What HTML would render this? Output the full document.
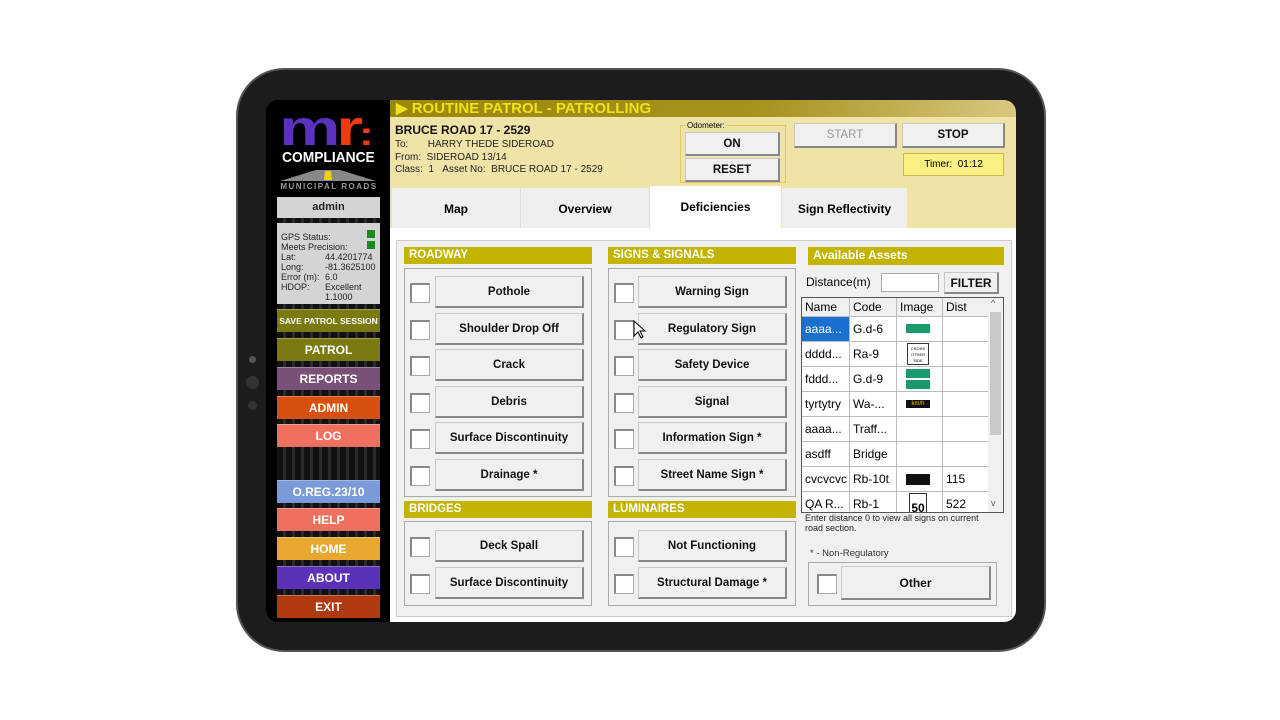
<!DOCTYPE html>
<html><head><meta charset="utf-8"><style>
*{box-sizing:border-box;margin:0;padding:0}
body{width:1280px;height:720px;background:#fff;position:relative;overflow:hidden;font-family:"Liberation Sans",sans-serif}
.a{position:absolute}
.dev{left:236px;top:68px;width:810px;height:584px;border-radius:48px;background:#1c1c1c;border:2px solid #555}
.scr{left:266px;top:100px;width:750px;height:522px;border-radius:12px;overflow:hidden;background:#000}
.side{left:0;top:0;width:124px;height:522px;background:#000}
.str{position:absolute;left:11px;width:103px;background:repeating-linear-gradient(90deg,#111 0 6px,#2a2a2a 6px 9px)}
.sb{position:absolute;left:11px;width:103px;height:23px;color:#fff;font-weight:bold;font-size:12px;text-align:center;line-height:23px;border-top:1px solid rgba(255,255,255,.3)}
.btn{position:absolute;background:#f0f0f0;border:1px solid #c8c8c8;border-right:2px solid #888;border-bottom:2px solid #888;font-weight:bold;font-size:11.5px;text-align:center;color:#111;display:flex;align-items:center;justify-content:center}
.cb{position:absolute;width:20px;height:20px;background:#fff;border:1px solid #aaa;border-left:2px solid #888;border-top:2px solid #888}
.hd{position:absolute;background:#c2b400;color:#fff;font-weight:bold;font-size:11.5px;padding-left:5px;line-height:17px}
.box{position:absolute;border:1px solid #aaa}
.tb{position:absolute;left:0;top:0;width:187px;font-size:12px}
.r{position:absolute;left:0;width:187px;height:25px;border-bottom:1px solid #bbb}
.c{position:absolute;top:0;height:100%;line-height:24px;padding-left:3px;white-space:nowrap;overflow:hidden;border-right:1px solid #bbb}
.c1{left:0;width:48px}.c2{left:48px;width:47px}.c3{left:95px;width:46px}.c4{left:141px;width:46px;border-right:none}
</style></head><body>
<div class="a dev"></div>
<div class="a" style="left:249px;top:356px;width:7px;height:7px;border-radius:50%;background:#555"></div>
<div class="a" style="left:246px;top:376px;width:13px;height:13px;border-radius:50%;background:#333"></div>
<div class="a" style="left:248px;top:401px;width:9px;height:9px;border-radius:50%;background:#333"></div>
<div class="a scr">
 <div class="a side">
  <div class="str" style="top:118px;height:6px"></div>
  <div class="str" style="top:204px;height:6px"></div>
  <div class="str" style="top:232px;height:6px"></div>
  <div class="str" style="top:261px;height:6px"></div>
  <div class="str" style="top:290px;height:6px"></div>
  <div class="str" style="top:318px;height:6px"></div>
  <div class="str" style="top:347px;height:33px"></div>
  <div class="str" style="top:402px;height:6px"></div>
  <div class="str" style="top:431px;height:6px"></div>
  <div class="str" style="top:460px;height:6px"></div>
  <div class="str" style="top:489px;height:6px"></div>
  <div class="a" style="left:13px;top:4px;font:bold 50px/48px 'Liberation Sans',sans-serif;letter-spacing:-3px;color:#5b32c0;transform:scale(1.38,1);transform-origin:left">m<span style="color:#f03a10">r</span><span style="color:#f03a10;font-size:32px">:</span></div>
  <div class="a" style="left:12px;top:49px;width:100px;text-align:center;color:#fff;font:bold 15px 'Liberation Sans',sans-serif;transform:scaleX(.92)">COMPLIANCE</div>
  <svg class="a" style="left:12px;top:67px" width="100" height="16"><polygon points="2,14 38,3 62,3 98,14" fill="#888"/><polygon points="47,4 53,4 54,13 46,13" fill="#f0d000"/></svg>
  <div class="a" style="left:11px;top:82px;width:104px;text-align:center;color:#999;font:bold 8px 'Liberation Sans',sans-serif;letter-spacing:1.5px;background:#000">MUNICIPAL ROADS</div>
  <div class="a" style="left:11px;top:97px;width:103px;height:21px;background:#d4d4d4;text-align:center;font:bold 11px/21px 'Liberation Sans';color:#222">admin</div>
  <div class="a" style="left:11px;top:123px;width:103px;height:81px;background:#d4d4d4;font:9px/10px 'Liberation Sans';color:#222;padding:9px 0 0 4px">
   <div>GPS Status:</div><div>Meets Precision:</div><div>Lat:<span class="a" style="left:48px">44.4201774</span></div><div>Long:<span class="a" style="left:48px">-81.3625100</span></div><div>Error (m):<span class="a" style="left:48px">6.0</span></div><div>HDOP:<span class="a" style="left:48px">Excellent</span></div><div><span class="a" style="left:48px">1.1000</span>&nbsp;</div>
   <div class="a" style="left:90px;top:7px;width:8px;height:8px;background:#1a8a1a"></div>
   <div class="a" style="left:90px;top:18px;width:8px;height:8px;background:#1a8a1a"></div>
  </div>
  <div class="sb" style="top:209px;background:#7a7a10;font-size:8.5px">SAVE PATROL SESSION</div>
  <div class="sb" style="top:238px;background:#7a7a10">PATROL</div>
  <div class="sb" style="top:267px;background:#7a5078">REPORTS</div>
  <div class="sb" style="top:296px;background:#d85010">ADMIN</div>
  <div class="sb" style="top:324px;background:#f07060">LOG</div>
  <div class="sb" style="top:380px;background:#7a9ad8">O.REG.23/10</div>
  <div class="sb" style="top:408px;background:#f07060">HELP</div>
  <div class="sb" style="top:437px;background:#e8a830">HOME</div>
  <div class="sb" style="top:466px;background:#5a32b8">ABOUT</div>
  <div class="sb" style="top:495px;background:#b03a10">EXIT</div>
 </div>
 <div class="a" style="left:124px;top:0;width:626px;height:17px;background:linear-gradient(90deg,#9a8808,#a89220 60%,#d8c880);color:#f0e020;font:bold 15px/17px 'Liberation Sans';padding-left:6px">▶ ROUTINE PATROL - PATROLLING</div>
 <div class="a" style="left:124px;top:17px;width:626px;height:111px;background:#efe3a8"></div>
 <div class="a" style="left:129px;top:23px;font:bold 12px 'Liberation Sans';color:#111">BRUCE ROAD 17 - 2529</div>
 <div class="a" style="left:129px;top:39px;font:10px/12.5px 'Liberation Sans';color:#222">To:&nbsp;&nbsp;&nbsp;&nbsp;&nbsp;&nbsp;&nbsp;HARRY THEDE SIDEROAD<br>From:&nbsp;&nbsp;SIDEROAD 13/14<br>Class:&nbsp;&nbsp;1&nbsp;&nbsp;&nbsp;Asset No:&nbsp;&nbsp;BRUCE ROAD 17 - 2529</div>
 <div class="a" style="left:414px;top:25px;width:106px;height:58px;border:1px solid #e0c860"></div>
 <div class="a" style="left:420px;top:21px;font:8px 'Liberation Sans';background:#efe3a8;padding:0 1px">Odometer:</div>
 <div class="btn" style="left:419px;top:32px;width:95px;height:24px">ON</div>
 <div class="btn" style="left:419px;top:58px;width:95px;height:24px">RESET</div>
 <div class="btn" style="left:528px;top:23px;width:103px;height:25px;color:#999;font-weight:normal">START</div>
 <div class="btn" style="left:636px;top:23px;width:103px;height:25px">STOP</div>
 <div class="a" style="left:637px;top:53px;width:101px;height:23px;background:#f8f080;border:1px solid #c8b850;font:10px/21px 'Liberation Sans';text-align:center">Timer:&nbsp;&nbsp;01:12</div>
 <div class="a" style="left:126px;top:88px;width:129px;height:40px;background:#efefef;border-right:1px solid #ddd;font:bold 12px/42px 'Liberation Sans';text-align:center">Map</div>
 <div class="a" style="left:255px;top:88px;width:129px;height:40px;background:#efefef;border-right:1px solid #ddd;font:bold 12px/42px 'Liberation Sans';text-align:center">Overview</div>
 <div class="a" style="left:384px;top:86px;width:131px;height:42px;background:#fff;font:bold 12px/42px 'Liberation Sans';text-align:center">Deficiencies</div>
 <div class="a" style="left:516px;top:88px;width:125px;height:40px;background:#efefef;font:bold 12px/42px 'Liberation Sans';text-align:center">Sign Reflectivity</div>
 <div class="a" style="left:124px;top:128px;width:626px;height:394px;background:#fff"></div>
 <div class="a" style="left:130px;top:140px;width:616px;height:377px;background:#f0f0f0;border:1px solid #ccc"></div>
</div>
<div class="hd" style="left:404px;top:247px;width:188px">ROADWAY</div>
<div class="box" style="left:404px;top:268px;width:188px;height:229px"></div>
<div class="hd" style="left:608px;top:247px;width:188px">SIGNS &amp; SIGNALS</div>
<div class="box" style="left:608px;top:268px;width:188px;height:229px"></div>
<div class="hd" style="left:404px;top:501px;width:188px">BRIDGES</div>
<div class="box" style="left:404px;top:521px;width:188px;height:85px"></div>
<div class="hd" style="left:608px;top:501px;width:188px">LUMINAIRES</div>
<div class="box" style="left:608px;top:521px;width:188px;height:85px"></div>

<div class="cb" style="left:410px;top:283px"></div><div class="btn" style="left:435px;top:276px;width:149px;height:32px">Pothole</div>
<div class="cb" style="left:410px;top:320px"></div><div class="btn" style="left:435px;top:313px;width:149px;height:32px">Shoulder Drop Off</div>
<div class="cb" style="left:410px;top:356px"></div><div class="btn" style="left:435px;top:349px;width:149px;height:32px">Crack</div>
<div class="cb" style="left:410px;top:393px"></div><div class="btn" style="left:435px;top:386px;width:149px;height:32px">Debris</div>
<div class="cb" style="left:410px;top:429px"></div><div class="btn" style="left:435px;top:422px;width:149px;height:32px">Surface Discontinuity</div>
<div class="cb" style="left:410px;top:466px"></div><div class="btn" style="left:435px;top:459px;width:149px;height:32px">Drainage *</div>

<div class="cb" style="left:614px;top:283px"></div><div class="btn" style="left:638px;top:276px;width:149px;height:32px">Warning Sign</div>
<div class="cb" style="left:614px;top:320px"></div><div class="btn" style="left:638px;top:313px;width:149px;height:32px">Regulatory Sign</div>
<div class="cb" style="left:614px;top:356px"></div><div class="btn" style="left:638px;top:349px;width:149px;height:32px">Safety Device</div>
<div class="cb" style="left:614px;top:393px"></div><div class="btn" style="left:638px;top:386px;width:149px;height:32px">Signal</div>
<div class="cb" style="left:614px;top:429px"></div><div class="btn" style="left:638px;top:422px;width:149px;height:32px">Information Sign *</div>
<div class="cb" style="left:614px;top:466px"></div><div class="btn" style="left:638px;top:459px;width:149px;height:32px">Street Name Sign *</div>
<svg class="a" style="left:633px;top:320px" width="14" height="20"><path d="M1 1 L1 16 L5 12 L8 18 L10 17 L7 11 L12 11 Z" fill="#fff" stroke="#000" stroke-width="1"/></svg>

<div class="cb" style="left:410px;top:537px"></div><div class="btn" style="left:435px;top:530px;width:149px;height:32px">Deck Spall</div>
<div class="cb" style="left:410px;top:574px"></div><div class="btn" style="left:435px;top:567px;width:149px;height:32px">Surface Discontinuity</div>
<div class="cb" style="left:614px;top:537px"></div><div class="btn" style="left:638px;top:530px;width:149px;height:32px">Not Functioning</div>
<div class="cb" style="left:614px;top:574px"></div><div class="btn" style="left:638px;top:567px;width:149px;height:32px">Structural Damage *</div>

<div class="hd" style="left:808px;top:247px;width:196px;height:18px;font-size:12px">Available Assets</div>
<div class="a" style="left:806px;top:275px;font:12px 'Liberation Sans'">Distance(m)</div>
<div class="a" style="left:881px;top:273px;width:58px;height:19px;background:#fff;border:1px solid #aaa"></div>
<div class="btn" style="left:944px;top:272px;width:55px;height:22px;font-size:12px">FILTER</div>
<div class="a" style="left:801px;top:297px;width:203px;height:216px;background:#fff;border:1px solid #555;overflow:hidden">
 <div class="tb">
  <div class="r" style="top:0;height:19px;background:#f0f0f0"><div class="c c1" style="line-height:19px">Name</div><div class="c c2" style="line-height:19px">Code</div><div class="c c3" style="line-height:19px">Image</div><div class="c c4" style="line-height:19px">Dist</div></div>
  <div class="r" style="top:19px"><div class="c c1" style="background:#1a70d0;color:#fff">aaaa...</div><div class="c c2">G.d-6</div><div class="c c3"><div class="a" style="left:9px;top:7px;width:24px;height:9px;background:#1a9a6a"></div></div><div class="c c4"></div></div>
  <div class="r" style="top:44px"><div class="c c1">dddd...</div><div class="c c2">Ra-9</div><div class="c c3"><div class="a" style="left:10px;top:1px;width:22px;height:22px;border:1.5px solid #333;font-size:4px;text-align:center;line-height:6px;padding-top:2px;overflow:hidden;white-space:normal">CROSS OTHER SIDE</div></div><div class="c c4"></div></div>
  <div class="r" style="top:69px"><div class="c c1">fddd...</div><div class="c c2">G.d-9</div><div class="c c3"><div class="a" style="left:9px;top:2px;width:24px;height:9px;background:#1a9a6a"></div><div class="a" style="left:9px;top:13px;width:24px;height:9px;background:#1a9a6a"></div></div><div class="c c4"></div></div>
  <div class="r" style="top:94px"><div class="c c1">tyrtytry</div><div class="c c2">Wa-...</div><div class="c c3"><div class="a" style="left:9px;top:8px;width:24px;height:8px;background:#111;color:#f0c000;font-size:6px;line-height:8px;text-align:center;padding:0">km/h</div></div><div class="c c4"></div></div>
  <div class="r" style="top:119px"><div class="c c1">aaaa...</div><div class="c c2">Traff...</div><div class="c c3"></div><div class="c c4"></div></div>
  <div class="r" style="top:144px"><div class="c c1">asdff</div><div class="c c2">Bridge</div><div class="c c3"></div><div class="c c4"></div></div>
  <div class="r" style="top:169px"><div class="c c1">cvcvcvc</div><div class="c c2">Rb-10t</div><div class="c c3"><div class="a" style="left:9px;top:7px;width:24px;height:11px;background:#111"></div></div><div class="c c4">115</div></div>
  <div class="r" style="top:194px"><div class="c c1">QA R...</div><div class="c c2">Rb-1</div><div class="c c3"><div class="a" style="left:12px;top:1px;width:18px;height:22px;border:1px solid #333;font-size:12px;line-height:28px;text-align:center;font-weight:bold;padding:0">50</div></div><div class="c c4">522</div></div>
 </div>
 <div class="a" style="left:186px;top:0;width:15px;height:214px;background:#f0f0f0"></div>
 <div class="a" style="left:188px;top:14px;width:11px;height:123px;background:#c8c8c8"></div>
 <div class="a" style="left:189px;top:0;font-size:9px;color:#555">^</div>
 <div class="a" style="left:189px;top:200px;font-size:9px;color:#555">v</div>
</div>
<div class="a" style="left:805px;top:514px;font:9px/9.5px 'Liberation Sans';color:#222">Enter distance 0 to view all signs on current<br>road section.</div>
<div class="a" style="left:810px;top:548px;font:9.5px 'Liberation Sans';color:#333">* - Non-Regulatory</div>
<div class="box" style="left:808px;top:562px;width:189px;height:44px"></div>
<div class="cb" style="left:817px;top:574px"></div>
<div class="btn" style="left:841px;top:566px;width:150px;height:34px;font-size:12px">Other</div>
</body></html>
